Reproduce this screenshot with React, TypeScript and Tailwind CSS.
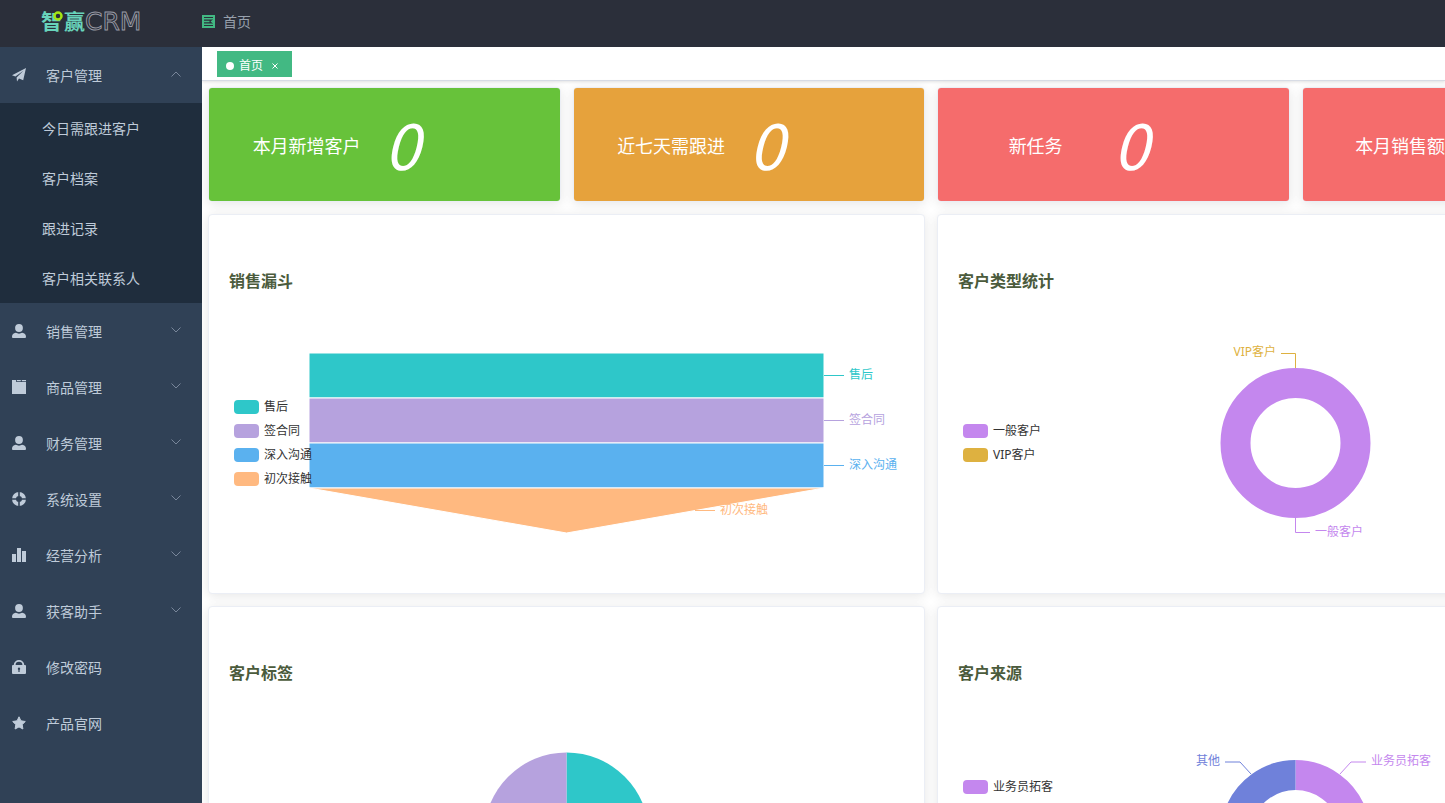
import type { ReactNode } from 'react';
import clsx from 'clsx';

const icons: Record<string, ReactNode> = {
  plane: (
    <path d="M14 0 11.2 12.2 7 10.4 5 13.6 4.6 9.4 11.4 2.8 3.4 8.6 0 7.2Z" />
  ),
  user: (
    <>
      <ellipse cx="7" cy="4" rx="3.9" ry="4" />
      <path d="M3.8 8.800c2 1.100 4.400 1.100 6.400 0C12.600 9.200 14 10.600 14 12.800c0 .9-.4 1.200-1.400 1.200H1.400C.4 14 0 13.700 0 12.800c0-2.200 1.400-3.600 3.800-4Z" />
    </>
  ),
  goods: (
    <path d="M0 0h4.200v2H14v12H0ZM5 0h3.800v1.200H5ZM9.800 0H14v1.200H9.800Z" />
  ),
  help: (
    <>
      <circle cx="7" cy="7" r="5" fill="none" stroke="currentColor" strokeWidth="4" />
      <path d="M7 0v4.500M7 9.500V14M0 7h4.500M9.500 7H14" stroke="#304156" strokeWidth="1.600" />
    </>
  ),
  data: <path d="M0 6h4v8H0ZM5 0h4v14H5ZM10 3h4v11h-4Z" />,
  lock: (
    <path
      fillRule="evenodd"
      d="M1.800 5V4.800a5.200 4.800 0 0 1 10.400 0V5H13a1 1 0 0 1 1 1v7a1 1 0 0 1-1 1H1a1 1 0 0 1-1-1V6a1 1 0 0 1 1-1ZM3.600 5h6.800a3.400 3.300 0 0 0-6.800 0ZM7 7.600a1.300 1.300 0 0 0-.6 2.400V12h1.200v-2A1.300 1.300 0 0 0 7 7.600Z"
    />
  ),
  star: (
    <path
      d="M7 .8 8.900 4.800 13.300 5.500 10.200 8.600 10.900 13 7 10.900 3.100 13 3.800 8.600 .7 5.500 5.100 4.800Z"
      stroke="currentColor"
      strokeLinejoin="round"
    />
  ),
};

const menu = [
  {
    label: '客户管理',
    icon: 'plane',
    children: ['今日需跟进客户', '客户档案', '跟进记录', '客户相关联系人'],
  },
  { label: '销售管理', icon: 'user', expandable: true },
  { label: '商品管理', icon: 'goods', expandable: true },
  { label: '财务管理', icon: 'user', expandable: true },
  { label: '系统设置', icon: 'help', expandable: true },
  { label: '经营分析', icon: 'data', expandable: true },
  { label: '获客助手', icon: 'user', expandable: true },
  { label: '修改密码', icon: 'lock' },
  { label: '产品官网', icon: 'star' },
];

const stats = [
  { label: '本月新增客户', value: 0, color: 'bg-[#67c23a]' },
  { label: '近七天需跟进', value: 0, color: 'bg-[#e6a23c]' },
  { label: '新任务', value: 0, color: 'bg-[#f56c6c]' },
  { label: '本月销售额', value: 0, color: 'bg-[#f56c6c]' },
];

function Logo() {
  return (
    <svg width="108" height="40" viewBox="0 0 108 40" role="img" aria-label="智赢CRM">
      <g fill="#68d3bb" fontFamily="'Noto Sans CJK SC', sans-serif" fontSize="21" fontWeight="700">
        <text x="1" y="27">智</text>
        <text x="24" y="27">赢</text>
      </g>
      <circle cx="18" cy="14" r="3.500" fill="#2b2f3a" stroke="#a4e613" strokeWidth="2.500" />
      <text
        x="45"
        y="28"
        fill="none"
        stroke="#9a9ca6"
        strokeWidth="0.900"
        fontFamily="'DejaVu Sans', sans-serif"
        fontSize="25"
      >
        CRM
      </text>
    </svg>
  );
}

function Header() {
  return (
    <header className="flex h-[47px] shrink-0 items-center bg-[#2b2f3a] pb-1">
      <a href="#" className="w-[202px] shrink-0 pl-10">
        <Logo />
      </a>
      <button type="button" aria-label="收起菜单">
        <svg width="13" height="13" viewBox="0 0 13 13" fill="none" stroke="#42b983">
          <path d="M1 1h11v11H1Z" strokeWidth="2" />
          <path d="M2 3.750h9M2 6.500h5.500M2 9.250h9" strokeWidth="1.300" />
          <path d="M11 4.500v4L8.500 6.500Z" fill="#42b983" stroke="none" />
        </svg>
      </button>
      <a href="#" className="ml-2 text-sm text-[#97a0ac]">
        首页
      </a>
    </header>
  );
}

function Chevron({ open }: { open?: boolean }) {
  return (
    <svg
      width="10"
      height="6"
      viewBox="0 0 10 6"
      fill="none"
      stroke="#78869a"
      className={clsx('mb-0.5 ml-auto', open && 'rotate-180')}
    >
      <path d="M.5 .5 5 5 9.500 .5" />
    </svg>
  );
}

function Sidebar() {
  return (
    <nav className="w-[202px] shrink-0 bg-[#304156] text-sm text-[#bfcbd9]">
      <ul>
        {menu.map((item) => (
          <li key={item.label}>
            <button type="button" className="flex h-14 w-full items-center pr-[21px] pl-3">
              <svg width="14" height="14" viewBox="0 0 14 14" fill="currentColor" className="mr-5">
                {icons[item.icon]}
              </svg>
              <span className="pt-0.5">{item.label}</span>
              {(item.children || item.expandable) && <Chevron open={!!item.children} />}
            </button>
            {item.children && (
              <ul className="bg-[#1f2d3d]">
                {item.children.map((child) => (
                  <li key={child}>
                    <a href="#" className="flex h-[50px] items-center pt-0.5 pl-[42px]">
                      {child}
                    </a>
                  </li>
                ))}
              </ul>
            )}
          </li>
        ))}
      </ul>
    </nav>
  );
}

function TagsBar() {
  return (
    <div className="flex h-[34px] items-center border-b border-[#d8dce5] px-[15px] shadow-[0_1px_3px_rgba(0,0,0,0.12)]">
      <div className="flex h-[26px] items-center bg-[#42b983] px-[9px] pt-1 pr-[14px] text-xs text-white">
        <span className="mr-[5px] h-2 w-2 rounded-full bg-white" />
        <a href="#">首页</a>
        <button type="button" aria-label="关闭" className="ml-[9px]">
          <svg width="6" height="6" viewBox="0 0 6 6" stroke="#fff">
            <path d="M.5 .5 5.500 5.500M5.500 .5 .5 5.500" />
          </svg>
        </button>
      </div>
    </div>
  );
}

function StatCard({ label, value, color }: (typeof stats)[number]) {
  return (
    <div className="rounded border border-[#ebeef5] shadow-[0_2px_12px_rgba(0,0,0,0.1)]">
      <div className={clsx('grid h-[113px] grid-cols-2 items-center rounded-[3px] px-5 pt-0.5 text-white', color)}>
        <span className="text-center text-lg">{label}</span>
        <em className="pb-2 font-['Noto_Sans_CJK_SC',sans-serif] text-[64px] leading-none">{value}</em>
      </div>
    </div>
  );
}

type LegendItem = { name: string; color: string };

function Panel({ title, legend, children }: { title: string; legend: LegendItem[]; children: ReactNode }) {
  return (
    <section className="rounded border border-[#ebeef5] bg-white p-5 pt-[34px] shadow-[0_2px_12px_rgba(0,0,0,0.1)]">
      <h3 className="mt-5 text-base font-bold text-[#4b5b3c]">{title}</h3>
      <div className="relative">
        <svg viewBox="0 0 675 280" className="block w-full" fontSize="12">
          {children}
        </svg>
        <ul className="absolute inset-y-0 left-[5px] flex translate-y-[10px] flex-col justify-center text-xs leading-6 text-[#333]">
          {legend.map((item) => (
            <li key={item.name} className="flex items-center gap-[5px]">
              <svg width="25" height="14" aria-hidden="true">
                <rect width="25" height="14" rx="4" fill={item.color} />
              </svg>
              {item.name}
            </li>
          ))}
        </ul>
      </div>
    </section>
  );
}

const funnel = [
  { name: '售后', color: '#2ec7c9' },
  { name: '签合同', color: '#b6a2de' },
  { name: '深入沟通', color: '#5ab1ef' },
  { name: '初次接触', color: '#ffb980' },
];

function FunnelChart() {
  return (
    <>
      {funnel.map((step, i) => {
        const top = 60 + i * 45;
        const last = i === funnel.length - 1;
        const lineX = last ? 466 : 595;
        return (
          <g key={step.name} fill={step.color}>
            <path
              d={last ? `M80 ${top}H595L337.500 ${top + 45}Z` : `M80 ${top}H595V${top + 45}H80Z`}
              stroke="#fff"
            />
            <path d={`M${lineX} ${top + 22.5}h20`} stroke={step.color} />
            <text x={lineX + 25} y={top + 26}>
              {step.name}
            </text>
          </g>
        );
      })}
    </>
  );
}

const types = [
  { name: '一般客户', color: '#c487ee' },
  { name: 'VIP客户', color: '#deb140' },
];

function TypeChart() {
  return (
    <>
      <circle cx="337.500" cy="150" r="60" fill="none" stroke="#c487ee" strokeWidth="30" />
      <path d="M337.500 75V60.500H323" fill="none" stroke="#deb140" />
      <text x="318" y="63" textAnchor="end" fill="#deb140">
        VIP客户
      </text>
      <path d="M337.500 225v14.500H352" fill="none" stroke="#c487ee" />
      <text x="357" y="243" fill="#c487ee">
        一般客户
      </text>
    </>
  );
}

const tags = [
  { name: '重点客户', color: '#2ec7c9' },
  { name: '普通客户', color: '#b6a2de' },
];

function TagChart() {
  return (
    <>
      <path d="M337.500 67.500a82.500 82.500 0 0 1 0 165Z" fill="#2ec7c9" />
      <path d="M337.500 67.500a82.500 82.500 0 0 0 0 165Z" fill="#b6a2de" />
    </>
  );
}

const sources = [
  { name: '业务员拓客', color: '#c487ee' },
  { name: '网络推广', color: '#deb140' },
  { name: '客户介绍', color: '#49dff0' },
  { name: '电话营销', color: '#034079' },
  { name: '其他', color: '#6f81da' },
];

function SourceChart() {
  const slice = (2 * Math.PI * 60) / sources.length;
  return (
    <>
      <g transform="rotate(-90 337.5 150)" fill="none" strokeWidth="30">
        {sources.map((s, i) => (
          <circle
            key={s.name}
            cx="337.500"
            cy="150"
            r="60"
            stroke={s.color}
            strokeDasharray={`${slice} ${slice * 4}`}
            strokeDashoffset={-slice * i}
          />
        ))}
      </g>
      <path d="M382 89l11-12h15" fill="none" stroke="#c487ee" />
      <text x="413" y="80" fill="#c487ee">
        业务员拓客
      </text>
      <path d="M293 89l-11-12h-15" fill="none" stroke="#6f81da" />
      <text x="262" y="80" textAnchor="end" fill="#6f81da">
        其他
      </text>
    </>
  );
}

export default function App() {
  return (
    <div className="flex h-screen flex-col overflow-hidden bg-white font-['Noto_Sans','Noto_Sans_CJK_SC',sans-serif]">
      <Header />
      <div className="flex min-h-0 flex-1">
        <Sidebar />
        <main className="min-w-0 flex-1 overflow-hidden">
          <TagsBar />
          <div className="flex min-w-[1458px] flex-col gap-3 px-[6px] pt-[6px]">
            <div className="grid grid-cols-4 gap-3">
              {stats.map((stat) => (
                <StatCard key={stat.label} {...stat} />
              ))}
            </div>
            <div className="grid grid-cols-2 gap-3">
              <Panel title="销售漏斗" legend={funnel}>
                <FunnelChart />
              </Panel>
              <Panel title="客户类型统计" legend={types}>
                <TypeChart />
              </Panel>
              <Panel title="客户标签" legend={tags}>
                <TagChart />
              </Panel>
              <Panel title="客户来源" legend={sources}>
                <SourceChart />
              </Panel>
            </div>
          </div>
        </main>
      </div>
    </div>
  );
}
